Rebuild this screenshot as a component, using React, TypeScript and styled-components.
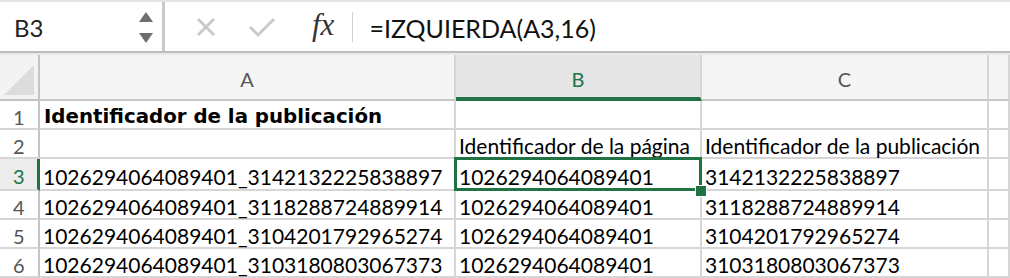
import React from "react";
import styled, { createGlobalStyle } from "styled-components";

const Global = createGlobalStyle`
  html, body { margin: 0; padding: 0; background: #ffffff; }
  body { width: 1010px; height: 278px; overflow: hidden; }
`;

const GREEN = "#217346";
const GRID = "#d6d6d6";
const CELL_FONT = `"Lato", "Open Sans", "Liberation Sans", sans-serif`;

const Page = styled.div`
  width: 1010px;
  height: 278px;
  overflow: hidden;
  display: flex;
  flex-direction: column;
  background: #fff;
`;

const FormulaBar = styled.div`
  height: 51px;
  display: flex;
  align-items: stretch;
  border-top: 2px solid #e4e4e4;
  border-bottom: 2px solid #bcbcbc;
  background: #fff;
`;

const Spacer = styled.div`
  height: 2px;
  background: #e8e8e8;
`;

const NameBox = styled.div`
  width: 165px;
  display: flex;
  align-items: center;
  justify-content: space-between;
  padding: 2px 9px 0 14px;
  box-sizing: border-box;
  border-right: 3px solid #c9c9c9;
`;

const NameText = styled.span`
  font-family: ${CELL_FONT};
  font-size: 24px;
  color: #222;
`;

const Spinner = styled.div`
  display: flex;
  flex-direction: column;
  gap: 11px;
`;

const Tri = styled.div<{ $down?: boolean }>`
  width: 0;
  height: 0;
  border-left: 7px solid transparent;
  border-right: 7px solid transparent;
  ${(p) =>
    p.$down
      ? `border-top: 10px solid #6e6e6e;`
      : `border-bottom: 10px solid #6e6e6e;`}
`;

const Tools = styled.div`
  display: flex;
  align-items: center;
  padding-left: 25px;
  gap: 24px;
`;

const IconBtn = styled.div`
  width: 32px;
  height: 32px;
  display: flex;
  align-items: center;
  justify-content: center;
`;

const Fx = styled.span`
  font-family: "Liberation Serif", "DejaVu Serif", serif;
  font-style: italic;
  font-size: 31px;
  color: #333;
  margin-left: 10px;
  padding-bottom: 3px;
`;

const Divider = styled.div`
  width: 1px;
  height: 30px;
  background: #d2d2d2;
  margin: 0 16px 0 18px;
  align-self: center;
`;

const FormulaText = styled.span`
  font-family: ${CELL_FONT};
  font-size: 25px;
  color: #111;
  align-self: center;
  padding-top: 3px;
`;

const Sheet = styled.div`
  display: grid;
  grid-template-columns: 40px 416px 246px 287px 1fr;
  grid-template-rows: 46px 29px 29px 32px 29px 29px 29px;
`;

const Corner = styled.div`
  background: #f3f3f3;
  border-right: 2px solid #c4c4c4;
  border-bottom: 2px solid #c4c4c4;
  position: relative;
  box-sizing: border-box;
  &::after {
    content: "";
    position: absolute;
    right: 4px;
    bottom: 4px;
    width: 0;
    height: 0;
    border-left: 30px solid transparent;
    border-bottom: 30px solid #dcdcdc;
  }
`;

const ColHead = styled.div<{ $active?: boolean }>`
  box-sizing: border-box;
  background: ${(p) => (p.$active ? "#e6e6e6" : "#f5f5f5")};
  border-right: 2px solid ${GRID};
  border-bottom: ${(p) => (p.$active ? `4px solid ${GREEN}` : "2px solid #c8c8c8")};
  display: flex;
  align-items: center;
  justify-content: center;
  font-family: ${CELL_FONT};
  font-size: 20px;
  color: ${(p) => (p.$active ? GREEN : "#555")};
  padding-top: ${(p) => (p.$active ? "5px" : "3px")};
`;

const RowHead = styled.div<{ $active?: boolean }>`
  box-sizing: border-box;
  background: ${(p) => (p.$active ? "#ececec" : "#fff")};
  border-right: ${(p) => (p.$active ? `3px solid ${GREEN}` : "2px solid #c4c4c4")};
  border-bottom: 2px solid ${GRID};
  display: flex;
  align-items: center;
  padding: 4px 0 0 13px;
  font-family: ${CELL_FONT};
  font-size: 20px;
  color: ${(p) => (p.$active ? GREEN : "#555")};
`;

const Cell = styled.div<{ $bold?: boolean }>`
  box-sizing: border-box;
  position: relative;
  border-right: 2px solid ${GRID};
  border-bottom: 2px solid ${GRID};
  display: flex;
  align-items: center;
  padding: ${(p) => (p.$bold ? "4px 0 0 4px" : "4px 0 0 3px")};
  white-space: nowrap;
  overflow: visible;
  font-family: ${(p) =>
    p.$bold ? `"DejaVu Sans", "Verdana", sans-serif` : CELL_FONT};
  font-weight: ${(p) => (p.$bold ? 700 : 400)};
  font-size: ${(p) => (p.$bold ? "19.8px" : "21px")};
  color: #000;
`;

const Selection = styled.div`
  position: absolute;
  z-index: 2;
  left: -2px;
  top: -2px;
  right: -2px;
  bottom: -2px;
  border: 3px solid ${GREEN};
  pointer-events: none;
  &::after {
    content: "";
    position: absolute;
    right: -8px;
    bottom: -9px;
    width: 10px;
    height: 10px;
    background: ${GREEN};
    border: 1px solid #fff;
  }
`;

const ids = [
  "3142132225838897",
  "3118288724889914",
  "3104201792965274",
  "3103180803067373",
];
const page = "1026294064089401";

export default function App() {
  return (
    <Page>
      <Global />
      <FormulaBar>
        <NameBox>
          <NameText>B3</NameText>
          <Spinner>
            <Tri />
            <Tri $down />
          </Spinner>
        </NameBox>
        <Tools>
          <IconBtn>
            <svg width="22" height="22" viewBox="0 0 22 22">
              <path d="M3 3 L19 19 M19 3 L3 19" stroke="#cacaca" strokeWidth="3" />
            </svg>
          </IconBtn>
          <IconBtn>
            <svg width="28" height="22" viewBox="0 0 28 22">
              <path d="M2 11 L10 19 L26 3" stroke="#cacaca" strokeWidth="3" fill="none" />
            </svg>
          </IconBtn>
          <Fx>fx</Fx>
        </Tools>
        <Divider />
        <FormulaText>=IZQUIERDA(A3,16)</FormulaText>
      </FormulaBar>
      <Spacer />
      <Sheet>
        <Corner />
        <ColHead>A</ColHead>
        <ColHead $active>B</ColHead>
        <ColHead>C</ColHead>
        <ColHead />

        <RowHead>1</RowHead>
        <Cell $bold>Identificador de la publicación</Cell>
        <Cell />
        <Cell />
        <Cell />

        <RowHead>2</RowHead>
        <Cell />
        <Cell>Identificador de la página</Cell>
        <Cell>Identificador de la publicación</Cell>
        <Cell />

        {ids.map((id, i) => (
          <React.Fragment key={id}>
            <RowHead $active={i === 0}>{i + 3}</RowHead>
            <Cell>{`${page}_${id}`}</Cell>
            <Cell>
              {page}
              {i === 0 && <Selection />}
            </Cell>
            <Cell>{id}</Cell>
            <Cell />
          </React.Fragment>
        ))}
      </Sheet>
    </Page>
  );
}
